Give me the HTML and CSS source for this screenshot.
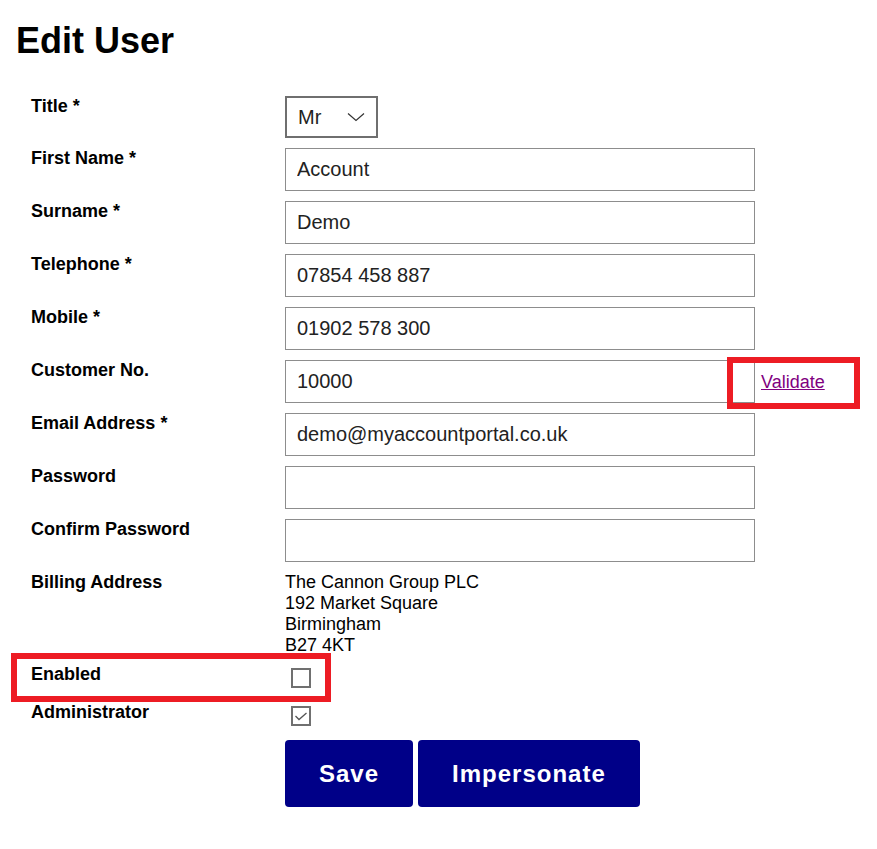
FILE: index.html
```html
<!DOCTYPE html>
<html lang="en">
<head>
<meta charset="utf-8">
<title>Edit User</title>
<link rel="stylesheet" href="styles.css">
</head>
<body>
<div class="page">
  <h1 class="title">Edit User</h1>
  <form class="form">
    <div class="row">
      <label class="label">Title *</label>
      <div class="control">
        <div class="select">
          <span class="select-value">Mr</span>
          <svg class="chevron" width="18" height="10" viewBox="0 0 18 10"><path d="M1 1.5 L9 8.5 L17 1.5" fill="none" stroke="#333" stroke-width="1.2"/></svg>
        </div>
      </div>
    </div>
    <div class="row">
      <label class="label">First Name *</label>
      <div class="control"><input class="input" type="text" value="Account"></div>
    </div>
    <div class="row">
      <label class="label">Surname *</label>
      <div class="control"><input class="input" type="text" value="Demo"></div>
    </div>
    <div class="row">
      <label class="label">Telephone *</label>
      <div class="control"><input class="input" type="text" value="07854 458 887"></div>
    </div>
    <div class="row">
      <label class="label">Mobile *</label>
      <div class="control"><input class="input" type="text" value="01902 578 300"></div>
    </div>
    <div class="row">
      <label class="label">Customer No.</label>
      <div class="control control-inline"><input class="input" type="text" value="10000"><a class="link" href="#">Validate</a></div>
    </div>
    <div class="row">
      <label class="label">Email Address *</label>
      <div class="control"><input class="input" type="text" value="demo@myaccountportal.co.uk"></div>
    </div>
    <div class="row">
      <label class="label">Password</label>
      <div class="control"><input class="input" type="password" value=""></div>
    </div>
    <div class="row">
      <label class="label">Confirm Password</label>
      <div class="control"><input class="input" type="password" value=""></div>
    </div>
    <div class="row row-address">
      <label class="label">Billing Address</label>
      <div class="control address">The Cannon Group PLC<br>192 Market Square<br>Birmingham<br>B27 4KT</div>
    </div>
    <div class="row">
      <label class="label">Enabled</label>
      <div class="control"><span class="checkbox"></span></div>
    </div>
    <div class="row">
      <label class="label">Administrator</label>
      <div class="control"><span class="checkbox"><svg width="16" height="16" viewBox="0 0 16 16"><path d="M2.5 8 L6 11.5 L13.5 5" fill="none" stroke="#555" stroke-width="1.3"/></svg></span></div>
    </div>
    <div class="buttons">
      <button class="btn" type="button">Save</button>
      <button class="btn" type="button">Impersonate</button>
    </div>
  </form>
  <div class="mark mark-validate"></div>
  <div class="mark mark-enabled"></div>
</div>
</body>
</html>
```
FILE: styles.css
```css
html, body {
  margin: 0;
  padding: 0;
  background: #fff;
}
body {
  font-family: "Liberation Sans", Arial, sans-serif;
  color: #000;
  font-size: 18px;
}
.page {
  position: relative;
  min-height: 849px;
  padding: 0 16px;
}
.title {
  margin: 0;
  padding-top: 20px;
  font-size: 36px;
  font-weight: bold;
  line-height: 41px;
  margin-bottom: 35px;
}
.form {
  padding-left: 15px;
}
.row {
  display: flex;
  align-items: flex-start;
  margin-bottom: 10px;
}
.row-address {
  margin-bottom: 8px;
}
.label {
  width: 254px;
  flex: none;
  font-weight: bold;
  font-size: 18px;
  line-height: 21px;
}
.control {
  display: flex;
  align-items: flex-start;
}
.control-inline {
  align-items: baseline;
}
.select {
  box-sizing: border-box;
  width: 93px;
  height: 42px;
  border: 2px solid #6f6f6f;
  display: flex;
  align-items: center;
  padding-left: 11px;
  font-size: 20px;
  color: #222;
}
.select-value {
  flex: 1;
}
.chevron {
  margin-right: 11px;
  margin-top: -1px;
}
.input {
  box-sizing: border-box;
  width: 470px;
  height: 43px;
  margin: 0;
  border: 1px solid #8d8d8d;
  padding: 0 11px;
  font-family: "Liberation Sans", Arial, sans-serif;
  font-size: 20px;
  color: #222;
  background: #fff;
  outline: none;
}
.link {
  margin-left: 6px;
  color: #800080;
  text-decoration: underline;
  font-size: 18px;
}
.address {
  display: block;
  line-height: 21px;
  font-size: 18px;
}
.checkbox {
  box-sizing: border-box;
  width: 20px;
  height: 20px;
  margin: 4px 0 4px 6px;
  border: 2px solid #707070;
  background: #fff;
  display: flex;
  align-items: center;
  justify-content: center;
}
.buttons {
  display: flex;
  gap: 5px;
  margin-left: 254px;
}
.btn {
  height: 67px;
  padding: 0 34px;
  border: none;
  border-radius: 4px;
  background: #000088;
  color: #fff;
  font-family: "Liberation Sans", Arial, sans-serif;
  font-weight: bold;
  font-size: 24px;
  letter-spacing: 1px;
}
.mark {
  position: absolute;
  box-sizing: border-box;
  border: 6px solid #ed1c24;
}
.mark-validate {
  left: 727px;
  top: 357px;
  width: 133px;
  height: 52px;
}
.mark-enabled {
  left: 11px;
  top: 653px;
  width: 320px;
  height: 49px;
}
```
